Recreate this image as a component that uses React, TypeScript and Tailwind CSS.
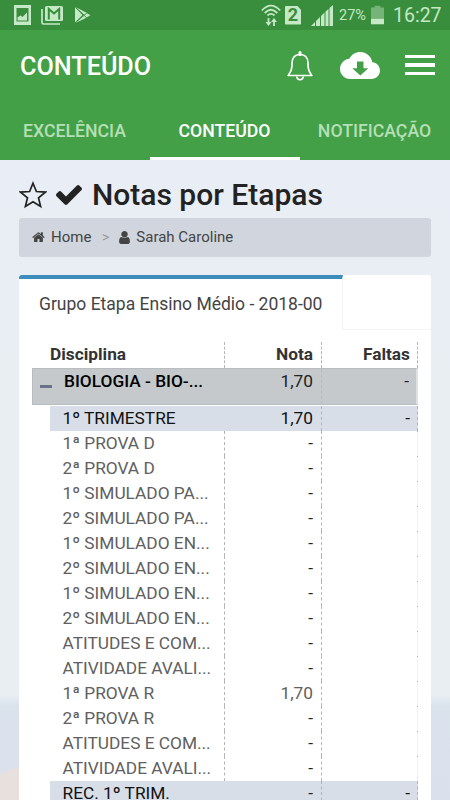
interface Row {
    name: string;
    nota: string;
    faltas?: string;
    group?: boolean;
}

const rows: Row[] = [
    { name: '1º TRIMESTRE', nota: '1,70', faltas: '-', group: true },
    { name: '1ª PROVA D', nota: '-' },
    { name: '2ª PROVA D', nota: '-' },
    { name: '1º SIMULADO PA...', nota: '-' },
    { name: '2º SIMULADO PA...', nota: '-' },
    { name: '1º SIMULADO EN...', nota: '-' },
    { name: '2º SIMULADO EN...', nota: '-' },
    { name: '1º SIMULADO EN...', nota: '-' },
    { name: '2º SIMULADO EN...', nota: '-' },
    { name: 'ATITUDES E COM...', nota: '-' },
    { name: 'ATIVIDADE AVALI...', nota: '-' },
    { name: '1ª PROVA R', nota: '1,70' },
    { name: '2ª PROVA R', nota: '-' },
    { name: 'ATITUDES E COM...', nota: '-' },
    { name: 'ATIVIDADE AVALI...', nota: '-' },
    { name: 'REC. 1º TRIM.', nota: '-', faltas: '-', group: true },
];

function StatusBar() {
    return (
        <div className="flex h-[30px] shrink-0 items-center bg-[#388e3c] pl-[14px] pr-[10px] text-[#c5e8c6]">
            <svg width="17" height="20" viewBox="0 0 17 20" fill="currentColor">
                <path fillRule="evenodd" d="M0 0h17v20H0zM2.5 3v13.500h12V3zM3.500 15.500v-3l3-2 2 1.500 4.500-4.500V15.500z" />
            </svg>
            <svg className="ml-[10px]" width="23" height="20" viewBox="0 0 23 20" fill="none" stroke="currentColor">
                <path d="M1 4v13.500q0 1.500 1.500 1.500H19" strokeWidth="1.700" />
                <path
                    d="M5.500 1h15q1.500 0 1.500 1.500v12q0 1.500-1.500 1.500h-15Q4 16 4 14.500v-12Q4 1 5.500 1z"
                    fill="currentColor"
                    stroke="none"
                />
                <path d="M7.800 14.500V4l5.200 4.500L18.200 4v10.500" stroke="#388e3c" strokeWidth="2" />
            </svg>
            <svg className="ml-[10px]" width="17" height="18" viewBox="0 0 17 18">
                <path d="M1 1v15.500L8.500 9z" fill="currentColor" />
                <path d="M1.500 1L13 7l-2 2.500zM1.500 17L13 11.500l-2-3z" fill="currentColor" />
                <path d="M12 6.500l4.300 2.700-4.300 2.900-2.500-2.900z" fill="currentColor" />
                <path d="M1.500 1.500L14 13M1.500 16.500L14 6" stroke="#388e3c" strokeWidth=".9" />
            </svg>

            <svg className="ml-auto" width="20" height="23" viewBox="0 0 20 23" fill="none" stroke="currentColor">
                <path d="M.800 6.500Q10-3.300 19.200 6.500M3.700 9Q10 2.500 16.300 9M6.500 11.500Q10 8.200 13.500 11.500" strokeWidth="1.800" />
                <path d="M7.500 14v5.500M13 22v-5.500" strokeWidth="1.800" />
                <path d="M4.500 18h6l-3 4zM10 18h6l-3-4z" fill="currentColor" stroke="none" />
            </svg>
            <div className="ml-[4px] flex h-[19px] w-[16px] items-center justify-center rounded-[1px] bg-[#c5e8c6] text-[18px] font-bold leading-none text-[#388e3c] [clip-path:polygon(0_0,75%_0,100%_22%,100%_100%,0_100%)]">
                2
            </div>
            <svg className="ml-[10px]" width="22" height="21" viewBox="0 0 22 21" fill="currentColor">
                <path d="M0 21l4-4v4zM5 21v-5l4-4v9zM10 21V11l3.500-3.500V21zM14.500 21V6.500L17.500 4v17zM18.500 21V3L22 0v21z" />
            </svg>
            <span className="ml-[6px] w-[29px] pt-[2px] text-[14.500px] leading-none">27%</span>
            <svg className="ml-[3px]" width="13" height="20" viewBox="0 0 14 20">
                <path d="M4 0h6v2h4v12H0V2h4z" fill="#75b378" />
                <path d="M0 14h14v6H0z" fill="currentColor" />
            </svg>
            <span className="ml-[9px] w-[47px] whitespace-nowrap pt-[2px] text-[19.500px] leading-none">16:27</span>
        </div>
    );
}

function AppBar() {
    return (
        <header className="flex h-[130px] shrink-0 flex-col bg-[#43a047] text-white">
            <div className="flex h-[72px] shrink-0 items-center pb-px pl-5 pr-[15px]">
                <h2 className="pt-[2px] text-[25.200px] font-medium leading-none">CONTEÚDO</h2>
                <svg className="ml-auto" width="26" height="30" viewBox="0 0 26 30" fill="none" stroke="currentColor">
                    <path
                        d="M13 3.500c-5.500 0-8 4-8 8.500 0 7.500-1.200 8.500-3.800 12.500h23.600c-2.600-4-3.800-5-3.800-12.500 0-4.500-2.500-8.500-8-8.500z"
                        strokeWidth="1.700"
                        strokeLinejoin="round"
                    />
                    <path d="M13 1.500v2" strokeWidth="3" strokeLinecap="round" />
                    <path d="M9.700 25.500c.5 4.300 6.100 4.300 6.600 0" strokeWidth="1.700" />
                </svg>
                <svg className="ml-[27px]" width="40" height="27" viewBox="0 0 40 27" fill="currentColor">
                    <path
                        fillRule="evenodd"
                        d="M32.300 10.200C31.300 4.300 26.300 0 20.300 0c-4.700 0-8.900 2.700-10.900 6.800C4.300 7.300 0 11.600 0 17c0 5.600 4.500 10 10 10h21.500c4.700 0 8.500-3.800 8.500-8.500 0-4.400-3.400-8-7.700-8.300zM17 9.500h6.500v6.800h4.800L20.300 23.500l-8-7.200H17z"
                    />
                </svg>
                <div className="ml-[25px] flex w-[30px] flex-col gap-[5px] pb-px">
                    <div className="h-[3px] bg-white" />
                    <div className="h-[4px] bg-white" />
                    <div className="h-[3px] bg-white" />
                </div>
            </div>
            <nav className="grid h-[58px] grid-cols-3 whitespace-nowrap text-center text-[17.700px] font-medium leading-[51px] text-[#b5dfb6]">
                <span className="pr-px pt-[4px]">EXCELÊNCIA</span>
                <span className="border-b-[3px] border-white pr-px pt-[4px] text-white">CONTEÚDO</span>
                <span className="pr-px pt-[4px]">NOTIFICAÇÃO</span>
            </nav>
        </header>
    );
}

function Breadcrumb() {
    return (
        <div className="mt-[2px] flex h-[39px] items-center rounded-[3px] bg-[#d1d6de] pb-px pl-[13px] text-[15px] text-[#444]">
            <svg width="13" height="14" viewBox="50 128 1700 1500" fill="currentColor">
                <path d="M1472 992v480q0 26-19 45t-45 19h-384v-384h-256v384h-384q-26 0-45-19t-19-45v-480q0-1 .5-3t.5-3l575-474 575 474q1 2 1 6zm223-69l-62 74q-8 9-21 11h-3q-13 0-21-7l-692-577-692 577q-12 8-24 7-13-2-21-11l-62-74q-8-10-7-23.5t11-21.5l719-599q32-26 76-26t76 26l244 204v-195q0-14 9-23t23-9h192q14 0 23 9t9 23v408l219 182q10 8 11 21.5t-7 23.5z" />
            </svg>
            <span className="ml-[6px] w-[41px]">Home</span>
            <span className="ml-[10px] text-[14px] text-[#999]">&gt;</span>
            <svg className="ml-[10px]" width="11" height="13" viewBox="256 128 1280 1536" fill="currentColor">
                <path d="M1536 1399q0 109-62.5 187t-150.5 78h-854q-88 0-150.5-78t-62.5-187q0-85 8.5-160.5t31.5-152 58.5-131 94-89 134.500-34.500q131 128 313 128t313-128q76 0 134.500 34.500t94 89 58.500 131 31.500 152 8.500 160.500zm-256-887q0 159-112.500 271.500t-271.500 112.500-271.500-112.500-112.500-271.500 112.500-271.500 271.500-112.500 271.500 112.500 112.500 271.500z" />
            </svg>
            <span className="ml-[6px]">Sarah Caroline</span>
        </div>
    );
}

function Grades() {
    return (
        <div className="ml-[13px] mr-[13px] mt-[12px] text-[17.300px]">
            <div className="flex h-[26px] font-bold leading-[25px] text-[#333]">
                <div className="w-[193px] border-r border-dashed border-[#b5b5b5] pl-[18px]">Disciplina</div>
                <div className="w-[97px] border-r border-dashed border-[#b5b5b5] pr-[8px] text-right">Nota</div>
                <div className="flex-1 border-r border-dashed border-[#b5b5b5] pr-[7px] text-right">Faltas</div>
            </div>
            <div className="flex h-[37px] border border-r-2 border-[#b9bdbf] border-r-[#dde1e4] bg-[#c5c9cb] leading-[25px] text-[#222]">
                <div className="flex w-[192px] items-start">
                    <div className="ml-[7px] mt-[16px] h-[3px] w-[12px] bg-[#6b7187]" />
                    <span className="ml-[12px] font-medium text-black">BIOLOGIA - BIO-...</span>
                </div>
                <div className="w-[97px] border-r border-dashed border-[#b7bbbd] pr-[8px] text-right">1,70</div>
                <div className="flex-1 pr-[7px] text-right">-</div>
            </div>
            <div className="h-px" />
            {rows.map((row, i) => (
                <div
                    key={i}
                    className={`ml-[18px] flex h-[25px] leading-[24px] ${row.group ? 'bg-[#d8dee7] text-[#111]' : 'text-[#606060]'}`}
                >
                    <div
                        className={`w-[175px] whitespace-nowrap pl-[12.500px] ${row.group ? '' : 'border-r border-dashed border-[#b5b5b5]'}`}
                    >
                        {row.name}
                    </div>
                    <div className="w-[97px] border-r border-dashed border-[#b5b5b5] pr-[8px] text-right">
                        <span className={row.nota === '-' ? 'text-[#222]' : ''}>{row.nota}</span>
                    </div>
                    <div
                        className={`relative flex-1 border-r pr-[7px] text-right ${row.group ? 'border-dashed border-[#b5b5b5]' : 'border-[#f1f1f1] after:absolute after:-right-px after:top-0 after:size-px after:bg-[#b5b5b5]'}`}
                    >
                        {row.faltas}
                    </div>
                </div>
            ))}
        </div>
    );
}

export default function App() {
    return (
        <div className="flex h-[800px] w-[450px] flex-col overflow-hidden bg-[#e9eef5] font-['Roboto',sans-serif]">
            <StatusBar />
            <AppBar />
            <main className="flex min-h-0 flex-1 flex-col bg-[radial-gradient(circle_at_30px_665px,#e8e0dd_57px,transparent_61px),linear-gradient(180deg,#e9eef6_0px,#e9eef3_220px,#e8eef2_535px,#dae2ec_546px,#dae1ec_640px)] px-[19px]">
                <div className="flex h-[56px] items-center pt-[14px] text-[#222]">
                    <svg width="28" height="28" viewBox="0 0 28 28" fill="none" stroke="currentColor" strokeWidth="1.700">
                        <path d="M14 2.200l3.400 8.300 9 .6-6.900 5.700 2.100 8.700L14 20.800l-7.600 4.700 2.100-8.700L1.600 11.100l9-.6z" />
                    </svg>
                    <svg className="ml-[9px]" width="26" height="20" viewBox="121 334 1550 1188" fill="currentColor">
                        <path d="M1671 566q0 40-28 68l-724 724-136 136q-28 28-68 28t-68-28l-136-136-362-362q-28-28-28-68t28-68l136-136q28-28 68-28t68 28l294 295 656-657q28-28 68-28t68 28l136 136q28 28 28 68z" />
                    </svg>
                    <h1 className="ml-[10px] whitespace-nowrap text-[30px] font-medium leading-[40px]">Notas por Etapas</h1>
                </div>
                <Breadcrumb />
                <section className="mt-[18px] min-h-0 flex-1 overflow-hidden rounded-t-[3px] bg-white">
                    <div className="flex h-[55px]">
                        <div className="w-[324px] whitespace-nowrap border-r border-t-[4px] border-[#f4f4f4] border-t-[#3c8dbc] pl-[20px] text-[17.500px] leading-[50px] text-[#444]">
                            Grupo Etapa Ensino Médio - 2018-00
                        </div>
                        <div className="flex-1 border-b border-[#f4f4f4]" />
                    </div>
                    <Grades />
                </section>
            </main>
        </div>
    );
}
